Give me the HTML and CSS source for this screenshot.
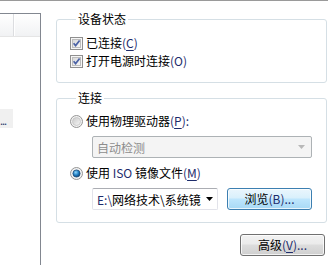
FILE: index.html
```html
<!DOCTYPE html>
<html lang="zh">
<head>
<meta charset="utf-8">
<link rel="stylesheet" href="styles.css">
</head>
<body>
<div class="window">
  <div class="list">
    <div class="list-head"><div class="col col1"></div><div class="col col2"></div></div>
    <div class="list-item">...</div>
  </div>
  <div class="settings">
    <fieldset class="group group-status">
      <legend>设备状态</legend>
      <label class="opt">
        <svg class="box" width="13" height="13" viewBox="0 0 13 13"><defs><linearGradient id="cg" x1="0" y1="0" x2="1" y2="1"><stop offset="0" stop-color="#d7d7d7"/><stop offset="1" stop-color="#f9f9f9"/></linearGradient></defs><rect x="0.5" y="0.5" width="12" height="12" fill="#f6f6f6" stroke="#8f8f8f"/><rect x="2.5" y="2.5" width="8" height="8" fill="url(#cg)" stroke="#bdbdbd"/><path d="M3.6 6.2 L5.6 8.6 L9.6 3.4" fill="none" stroke="#4b62a6" stroke-width="1.7"/></svg>
        <span>已连接<span class="k">(<u>C</u>)</span></span>
      </label>
      <label class="opt">
        <svg class="box" width="13" height="13" viewBox="0 0 13 13"><rect x="0.5" y="0.5" width="12" height="12" fill="#f6f6f6" stroke="#8f8f8f"/><rect x="2.5" y="2.5" width="8" height="8" fill="url(#cg)" stroke="#bdbdbd"/><path d="M3.6 6.2 L5.6 8.6 L9.6 3.4" fill="none" stroke="#4b62a6" stroke-width="1.7"/></svg>
        <span>打开电源时连接<span class="k">(O)</span></span>
      </label>
    </fieldset>
    <fieldset class="group group-conn">
      <legend>连接</legend>
      <label class="opt">
        <svg class="box" width="13" height="13" viewBox="0 0 13 13"><defs><linearGradient id="rg" x1="0" y1="0" x2="1" y2="1"><stop offset="0" stop-color="#c9c9c9"/><stop offset="1" stop-color="#f7f7f7"/></linearGradient></defs><circle cx="6.5" cy="6.5" r="6" fill="#f2f2f2" stroke="#959595"/><circle cx="6.5" cy="6.5" r="4" fill="url(#rg)" stroke="#c4c4c4" stroke-width="0.8"/></svg>
        <span>使用物理驱动器<span class="k">(<u>P</u>):</span></span>
      </label>
      <div class="combo combo-disabled"><span class="combo-text">自动检测</span><svg class="arrow" width="7" height="4" viewBox="0 0 7 4"><path d="M0 0 H7 L3.5 4 Z" fill="#b8b8b8"/></svg></div>
      <label class="opt">
        <svg class="box" width="13" height="13" viewBox="0 0 13 13"><defs><radialGradient id="dg" cx="0.4" cy="0.35" r="0.7"><stop offset="0" stop-color="#8fd6fb"/><stop offset="0.55" stop-color="#1f7dc2"/><stop offset="1" stop-color="#0b3e6d"/></radialGradient></defs><circle cx="6.5" cy="6.5" r="6" fill="#f2f2f2" stroke="#959595"/><circle cx="6.5" cy="6.5" r="3.6" fill="url(#dg)" stroke="#1f4d78" stroke-width="0.8"/></svg>
        <span>使用 <span class="k">ISO</span> 镜像文件<span class="k">(<u>M</u>)</span></span>
      </label>
      <div class="file-row">
        <div class="combo combo-file"><span class="combo-text"><span class="k">E:\</span>网络技术\系统镜</span><svg class="arrow" width="7" height="4" viewBox="0 0 7 4"><path d="M0 0 H7 L3.5 4 Z" fill="#000"/></svg></div>
        <button class="btn btn-focus">浏览<span class="k">(B)...</span></button>
      </div>
    </fieldset>
    <div class="actions"><button class="btn">高级<span class="k">(<u>V</u>)...</span></button></div>
  </div>
</div>
</body>
</html>
```
FILE: styles.css
```css
* { box-sizing: border-box; }
html, body { margin: 0; padding: 0; background: #fff; }
body {
  width: 328px; height: 265px; overflow: hidden;
  font-family: "Noto Sans CJK SC", "Microsoft YaHei", sans-serif;
  font-size: 12px; color: #000;
}
.window {
  display: flex;
  height: 265px;
  border-top: 1px solid #9a9a9a;
}
.list {
  width: 41px;
  margin-top: 12px;
  border-top: 1px solid #828790;
  border-right: 1px solid #828790;
  flex: none;
}
.list-head {
  display: flex;
  height: 23px;
  background: linear-gradient(#ffffff, #f1f2f4);
  border-bottom: 1px solid #e5e5e5;
}
.col1 { width: 14px; border-right: 1px solid #dcdde0; box-shadow: 1px 0 0 #fff; }
.list-item {
  margin-top: 72px;
  width: 13px;
  height: 19px;
  padding-top: 4px;
  background: #f0f0f0;
  line-height: 15px;
  font-size: 11px;
  color: #2a3a6a;
  letter-spacing: -1px;
  overflow: hidden;
}
.settings {
  flex: none;
  width: 287px;
  padding: 11px 1px 0 15px;
  display: flex;
  flex-direction: column;
}
.group {
  margin: 0;
  border: 1px solid #d5dfe5;
  border-radius: 3px;
  padding: 0 0 0 13px;
  min-width: 0;
}
.group legend {
  margin-left: 6px;
  padding: 0 2px;
  line-height: 14px;
  height: 14px;
}
.group-status { padding-top: 8px; padding-bottom: 12px; }
.group-conn { margin-top: 8px; padding-top: 7px; padding-bottom: 12px; }
.opt {
  display: flex;
  align-items: center;
  height: 18px;
  line-height: 18px;
  gap: 3px;
  white-space: nowrap;
}
.box { flex: none; }
.k { color: #1d2c6b; }
u { text-decoration-thickness: 1px; text-underline-offset: 2px; }
.combo {
  display: flex;
  align-items: center;
  justify-content: space-between;
  height: 22px;
  margin: 6px 0 6px 22px;
  padding: 0 6px 0 4px;
  border: 1px solid #abadb3;
  border-radius: 2px;
  background: #fff;
  white-space: nowrap;
  overflow: hidden;
}
.combo-disabled {
  width: 220px;
  background: #f4f4f4;
  border-color: #adb2b5;
  color: #8d8d8d;
}
.combo-file { width: 126px; margin-bottom: 0; border-color: #e2e3ea; border-top-color: #abadb3; padding-right: 4px; }
.combo-text { overflow: hidden; }
.file-row { display: flex; align-items: flex-start; gap: 9px; }
.btn {
  font: inherit;
  color: #000;
  height: 22px;
  width: 85px;
  margin: 6px 0 0;
  padding: 0;
  border: 1px solid #707070;
  border-radius: 3px;
  background: linear-gradient(#f2f2f2 0%, #ebebeb 45%, #dddddd 50%, #cfcfcf 100%);
  box-shadow: inset 0 0 0 1px rgba(255,255,255,0.75);
  line-height: 18px;
}
.btn-focus {
  border-color: #3c7fb1;
  background: linear-gradient(#eaf6fd 0%, #d9f0fc 45%, #bee6fd 50%, #a7d9f5 100%);
}
.actions {
  display: flex;
  justify-content: flex-end;
  padding-right: 2px;
  margin-top: 5px;
}
.actions .btn { margin-top: 6px; }
```
